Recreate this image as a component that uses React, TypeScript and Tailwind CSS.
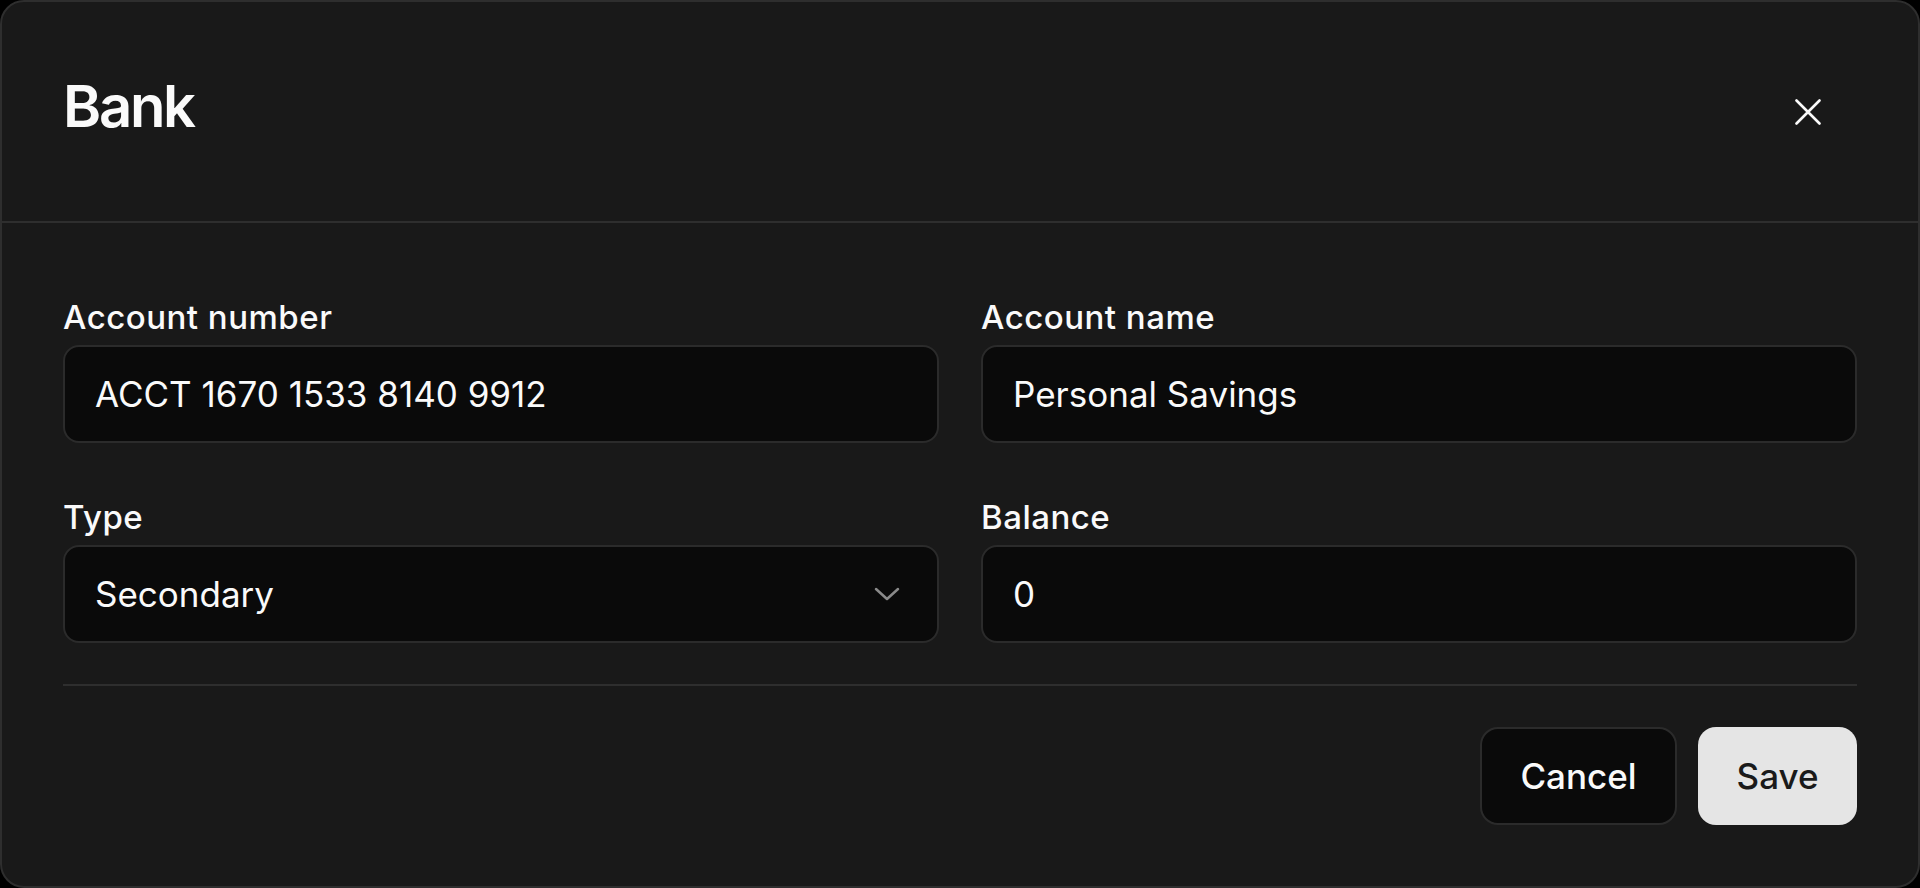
import React from "react";

function Field({ label, value, select }: { label: string; value: string; select?: boolean }) {
  return (
    <div className="flex flex-col">
      <div className="text-[33px] leading-[40px] font-medium tracking-[0.015em] text-[#fafafa] mb-2">{label}</div>
      <div className="h-[98px] rounded-[16px] border-2 border-[#2b2b2b] bg-[#0a0a0a] px-[30px] flex items-center justify-between">
        <span className="text-[35px] text-[#fafafa]">{value}</span>
        {select && (
          <svg width="26" height="16" viewBox="0 0 26 16" className="mr-[7px]">
            <path d="M2 3 L13 13 L24 3" fill="none" stroke="#8a8a8a" strokeWidth="2.5" strokeLinecap="round" strokeLinejoin="round" />
          </svg>
        )}
      </div>
    </div>
  );
}

export default function App() {
  return (
    <div className="w-[1920px] h-[888px] bg-black" style={{ fontFamily: "Inter, 'Noto Sans', sans-serif" }}>
      <div className="w-full h-full rounded-[24px] border-2 border-[#2e2e2e] bg-[#191919] overflow-hidden flex flex-col">
        <div className="h-[221px] border-b-2 border-[#2e2e2e] px-[61px] flex items-center justify-between shrink-0">
          <h1 className="text-[58px] leading-[60px] font-semibold tracking-[-0.04em] text-[#fafafa] mb-[12px]">Bank</h1>
          <button className="mr-[36px]">
            <svg width="26" height="26" viewBox="0 0 26 26">
              <path d="M1.5 1.5 L24.5 24.5 M24.5 1.5 L1.5 24.5" stroke="#fafafa" strokeWidth="2.6" strokeLinecap="round" />
            </svg>
          </button>
        </div>
        <div className="px-[61px] pt-[74px]">
          <div className="grid grid-cols-2 gap-x-[42px] gap-y-[54px]">
            <Field label="Account number" value="ACCT 1670 1533 8140 9912" />
            <Field label="Account name" value="Personal Savings" />
            <Field label="Type" value="Secondary" select />
            <Field label="Balance" value="0" />
          </div>
          <div className="mt-[41px] h-[2px] bg-[#2e2e2e]" />
          <div className="mt-[41px] flex justify-end gap-[21px]">
            <button className="w-[197px] h-[98px] rounded-[18px] border-2 border-[#2b2b2b] bg-[#0a0a0a] text-[35px] font-medium text-[#fafafa]">
              Cancel
            </button>
            <button className="w-[159px] h-[98px] rounded-[18px] bg-[#e5e5e5] text-[35px] font-medium text-[#1a1a1a]">
              Save
            </button>
          </div>
        </div>
      </div>
    </div>
  );
}
